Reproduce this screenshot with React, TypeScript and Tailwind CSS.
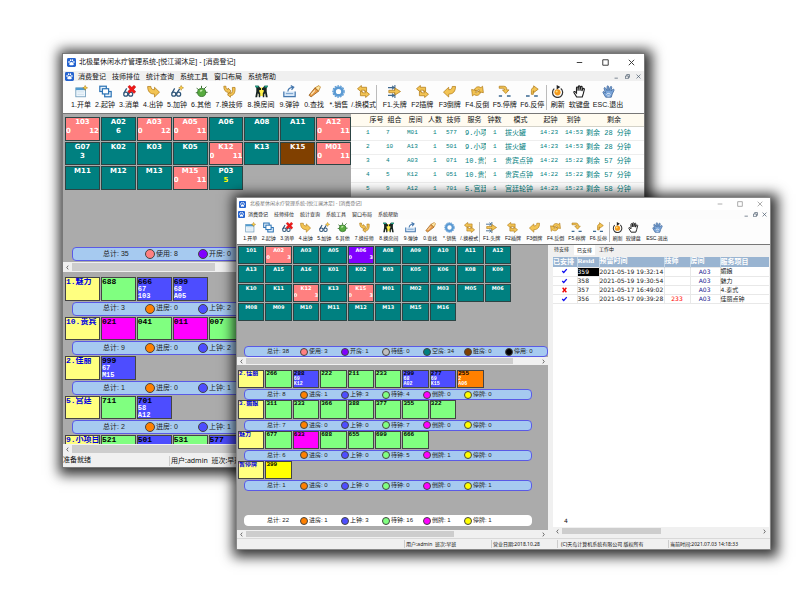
import type { ReactNode } from 'react';
import clsx from 'clsx';

type Size = 'lg' | 'sm';

interface Room {
  name: string;
  tone?: string;
  left?: string;
  right?: string;
  center?: string;
}

interface Tech {
  lines: string[];
  tone: string;
}

interface Stat {
  label: string;
  value: string;
  dot: string;
}

interface Group {
  name: string;
  techs: Tech[];
  total?: string;
  counts?: string[];
}

const TEAL = 'bg-[#008080]';
const PINK = 'bg-[#ff8080]';
const PURPLE = 'bg-[#8000ff]';
const BROWN = 'bg-[#804000]';
const GREEN = 'bg-[#80ff80]';
const BLUE = 'bg-[#4d4dff]';
const MAGENTA = 'bg-[#ff00ff]';
const ORANGE = 'bg-[#ff8000]';
const YELLOW = 'bg-[#ffff00]';

const uiFont = "font-['Liberation_Sans','Noto_Sans_CJK_SC',sans-serif]";
const statusFont = "font-['Noto_Sans','Noto_Sans_CJK_SC',sans-serif]";
const tileFont = "font-['DejaVu_Sans','Noto_Sans_CJK_SC',sans-serif]";
const monoFont = "font-['Liberation_Mono','Noto_Sans_CJK_SC',monospace]";

const menus = ['消费登记', '技师排位', '统计查询', '系统工具', '窗口布局', '系统帮助'];

function toRooms(names: string, busy: Record<string, Partial<Room>>): Room[] {
  return names.split(' ').map((name) => ({ name, ...busy[name] }));
}

const backRooms = toRooms(
  '103 A02 A03 A05 A06 A08 A11 A12 G07 K02 K03 K05 K12 K13 K15 M01 M11 M12 M13 M15 P03',
  {
    '103': { tone: PINK, left: '0', right: '12' },
    A02: { center: '6' },
    A03: { tone: PINK, left: '0', right: '12' },
    A05: { tone: PINK, left: '0', right: '11' },
    A12: { tone: PINK, left: '0', right: '11' },
    G07: { center: '3' },
    K12: { tone: PINK, left: '0', right: '11' },
    K15: { tone: BROWN },
    M01: { tone: PINK, left: '0', right: '11' },
    M15: { tone: PINK, left: '0', right: '11' },
    P03: { center: '5' },
  }
);

const frontRooms = toRooms(
  '101 A02 A03 A05 A06 A08 A09 A10 A11 A12 A13 A15 A16 K01 K02 K03 K05 K06 K08 K09 K10 K11 K12 K13 K15 M01 M02 M03 M05 M06 M08 M09 M10 M11 M12 M13 M15 M16',
  {
    A02: { tone: PINK, left: '0', right: '3' },
    A06: { tone: PURPLE, left: '0', right: '3' },
    K12: { tone: PINK, left: '0', right: '3' },
    K15: { tone: PINK, left: '0', right: '3' },
  }
);

function tech(tone: string, ...lines: string[]): Tech {
  return { tone, lines };
}

const backGroups: Group[] = [
  {
    name: '1.魅力',
    techs: [tech(GREEN, '688'), tech(BLUE, '666', '67', '103'), tech(BLUE, '699', '68', 'A05')],
    total: '3',
    counts: ['0', '2'],
  },
  {
    name: '10.贵宾',
    techs: [tech(MAGENTA, '021'), tech(GREEN, '041'), tech(MAGENTA, '011'), tech(GREEN, '007')],
    total: '9',
    counts: ['0', '2'],
  },
  { name: '2.佳丽', techs: [tech(BLUE, '999', '67', 'M15')], total: '1', counts: ['0', '1'] },
  {
    name: '5.宫廷',
    techs: [tech(GREEN, '711'), tech(BLUE, '701', '58', 'A12')],
    total: '2',
    counts: ['0', '1'],
  },
  {
    name: '9.小项目',
    techs: [tech(GREEN, '521'), tech(BLUE, '501'), tech(GREEN, '531'), tech(BLUE, '577')],
  },
];

const frontGroups: Group[] = [
  {
    name: '2.佳丽',
    techs: [
      tech(GREEN, '266'),
      tech(BLUE, '288', '69', 'K12'),
      tech(GREEN, '222'),
      tech(GREEN, '211'),
      tech(GREEN, '233'),
      tech(BLUE, '299', '68', 'A02'),
      tech(BLUE, '277', '69', 'K15'),
      tech(ORANGE, '255', '2', 'A06'),
    ],
    total: '8',
    counts: ['1', '3', '4', '0', '0'],
  },
  {
    name: '3.媚娘',
    techs: ['311', '333', '366', '388', '377', '355', '322'].map((n) => tech(GREEN, n)),
    total: '7',
    counts: ['0', '0', '7', '0', '0'],
  },
  {
    name: '魅力',
    techs: [
      tech(GREEN, '677'),
      tech(MAGENTA, '633'),
      tech(GREEN, '688'),
      tech(GREEN, '655'),
      tech(GREEN, '699'),
      tech(GREEN, '666'),
    ],
    total: '6',
    counts: ['0', '0', '5', '1', '0'],
  },
  { name: '暂停牌', techs: [tech(YELLOW, '399')], total: '1', counts: ['0', '0', '0', '0', '1'] },
];

const roomStats: Stat[] = [
  { label: '使用', value: '3', dot: PINK },
  { label: '开房', value: '1', dot: PURPLE },
  { label: '待结', value: '0', dot: 'bg-[#c0c0c0]' },
  { label: '空房', value: '34', dot: TEAL },
  { label: '脏房', value: '0', dot: BROWN },
  { label: '停用', value: '0', dot: 'bg-black' },
];

const techKinds = [
  { label: '进房', dot: ORANGE },
  { label: '上钟', dot: BLUE },
  { label: '待钟', dot: GREEN },
  { label: '倒牌', dot: MAGENTA },
  { label: '停牌', dot: YELLOW },
];

function techStats(counts: string[]): Stat[] {
  return counts.map((value, i) => ({ ...techKinds[i], value }));
}

const clockHead = ['序号', '组合', '房间', '人数', '技师', '服务', '钟数', '模式', '起钟', '到钟', '剩余'];
const clockCols = [
  'w-[33px]', 'w-[21px]', 'w-[21px]', 'w-[18px]', 'w-[19px]', 'w-[23px]',
  'w-[17px]', 'w-[35px]', 'w-[25px]', 'w-[21px]', '',
];
const clockRows = [
  ['1', '7', 'M01', '1', '577', '9.小项', '1', '拔火罐', '14:23', '14:53', '剩余 28 分钟'],
  ['2', '10', 'A13', '1', '501', '9.小项', '1', '拔火罐', '14:23', '14:53', '剩余 28 分钟'],
  ['3', '4', 'A03', '1', '071', '10.贵宾', '1', '贵宾点钟', '14:22', '15:22', '剩余 57 分钟'],
  ['4', '5', 'K12', '1', '051', '10.贵宾', '1', '贵宾点钟', '14:22', '15:22', '剩余 57 分钟'],
  ['5', '9', 'A12', '1', '701', '5.宫廷', '1', '宫廷轮钟', '14:23', '15:23', '剩余 58 分钟'],
];

const bookings = [
  { ok: true, id: '359', time: '2021-05-19 19:32:14', tech: '', room: 'A03', item: '媚娘' },
  { ok: true, id: '358', time: '2021-05-19 19:30:54', tech: '', room: 'A03', item: '魅力' },
  { ok: false, id: '357', time: '2021-05-17 16:49:02', tech: '', room: 'A03', item: '4.泰式' },
  { ok: true, id: '356', time: '2021-05-17 09:39:28', tech: '233', room: 'A03', item: '佳丽点钟' },
];

/* ---------- toolbar drawings, all on a 16 x 16 grid ---------- */

const gold = { fill: '#f3c454', stroke: '#b07a16', strokeWidth: 0.9, strokeLinejoin: 'round' as const };

function Sparkle() {
  return (
    <path d="M12.5 0.5l.9 2.1 2.1.9-2.1.9-.9 2.1-.9-2.1-2.1-.9 2.1-.9z" fill="#ffd54a" stroke="#a8740f" strokeWidth=".6" />
  );
}

function Glasses() {
  return (
    <g fill="none" stroke="#2d5478" strokeWidth="1.5">
      <circle cx="3.4" cy="11.3" r="2.5" />
      <circle cx="9.4" cy="11.3" r="2.5" />
      <path d="M1.2 10L4.5 4.2M7 10.4l3.6-5.6" />
    </g>
  );
}

// fat outlined arrows, left on top and right below
const swapArrows = (
  <g {...gold}>
    <path d="M.6 4.6L5.400 .6v2.200h6.400v5h-2.600V6.400H5.400v2.200z" />
    <path d="M15.400 11.400L10.600 15.400v-2.200H4.200v-5h2.600v1.400h3.800V7.400z" />
  </g>
);

const icons: Record<string, ReactNode> = {
  open: (
    <>
      <rect x="1" y="3.5" width="12" height="11" fill="#eef6fc" stroke="#6b98b8" />
      <rect x="1" y="3.5" width="12" height="2.8" fill="#4f9bd0" />
      <path d="M3 8.5h8M3 11.5h8" stroke="#c7dbe8" />
      <Sparkle />
    </>
  ),
  start: (
    <g fill="#e8f3fd" stroke="#2d74b5" strokeWidth="1.5">
      <rect x="1" y="1.5" width="8" height="6.5" />
      <rect x="7" y="8" width="8" height="6.5" />
      <rect x="4.2" y="4.6" width="7.6" height="6.4" fill="#fff" />
    </g>
  ),
  cancel: (
    <>
      <Glasses />
      <path d="M6 2.2L8.2.4l2.6 2.5L13.6.3 15.8 2.6 13.2 5.4l2.6 3-2.4 2-2.6-2.7L8 10.2 5.8 8l2.7-2.8z" fill="#f01818" stroke="#a00" strokeWidth=".5" />
    </>
  ),
  out: <path {...gold} d="M.8 1.800h4c0 2.800 1.400 4 4.400 4V2.800l6.200 6-6.200 6v-3.600C3.600 11.200.8 7.800.8 1.800z" />,
  add: (
    <>
      <Glasses />
      <Sparkle />
    </>
  ),
  other: (
    <>
      <path d="M2 4l3 2M1 9.5h3M11 5l3-3M12 9h3.5M8 4V1" stroke="#3b6e31" strokeWidth="1.2" />
      <circle cx="8.2" cy="9.2" r="5" fill="#58ab3f" stroke="#2f7028" />
      <path d="M6 6.7c1-1 2.5-1.2 3.6-.7L7 9z" fill="#c7efae" />
    </>
  ),
  tech: (
    <g {...gold}>
      <path d="M1 1.5h2.6c0 2.8.8 3.8 2.6 4V3.7L10 7.4 6.2 11V9C2.7 8.7 1 6 1 1.5z" />
      <path d="M11.5 3h3.3c.6 6.2-1.4 9.8-5.6 10.2V15L5.5 12 9.2 9v1.6c2.2-.5 2.8-3 2.3-7.6z" />
    </g>
  ),
  room: (
    <>
      <rect x="4.500" y="3" width="7" height="10.500" fill="#fff04a" />
      <path d="M0 1h4.500l1.700 2.400L7.400 4v2L5.300 6v2.400L6.400 10v5H4.600v-3.600L3.500 10 2.700 15H.4L1.600 8V4z" fill="#172421" />
      <path d="M16 1h-4.500L9.800 3.400 8.600 4v2l2.100 0v2.400L9.600 10v5h1.800v-3.600L12.500 10l.8 5h2.300L14.400 8V4z" fill="#172421" />
      <path d="M0 1h4.300v2H1zM16 1h-4.300v2H15z" fill="#19a184" />
    </>
  ),
  bounce: (
    <g fill="none" stroke="#4577ad" strokeWidth="1.5">
      <path d="M1 8v6.200h14V8" fill="#d8e8f8" />
      <path d="M3.500 10.500h9" stroke="#80a8d0" />
      <path d="M6 8c.3-3.200 2.200-4.700 6-5M9.500.8l3.700 2-2.700 3.200" />
    </g>
  ),
  find: (
    <>
      <path d="M8.500 3.500L13.500.7l1.800 1.800L13 7.600z" fill="#ffe9a6" stroke="#c2852b" />
      <path d="M1.200 12.600l7.300-9.100L13 7.600l-9.200 7z" fill="#e99b45" stroke="#99601f" />
      <path d="M4 11.500l4.500-5" stroke="#fff0c8" strokeWidth="1.300" />
    </>
  ),
  sale: (
    <>
      <circle cx="8" cy="8" r="7" fill="none" stroke="#5b9ad3" strokeWidth="1.400" strokeDasharray="2.200 1.200" />
      <circle cx="8" cy="8" r="4.900" fill="#fff" stroke="#5b9ad3" strokeWidth="3.400" />
    </>
  ),
  mode: swapArrows,
  head: (
    <>
      <path d="M0 3.200h7M0 12.800h7M5 1l2.500 2.200L5 5.500M5 10.500l2.500 2.300L5 15M8.500 0v16" fill="none" stroke="#3f678d" strokeWidth="1.300" />
      <path {...gold} d="M1 6.500h7.500V3.600l6.900 4.400-6.900 4.400V9.500H1z" />
    </>
  ),
  insert: swapArrows,
  invert: <path {...gold} d="M15.400 1.800h-4c0 2.800-1.400 4-4.400 4V2.800l-6.400 6 6.400 6v-3.600c5.600 0 8.400-3.400 8.400-9.400z" />,
  swirl: (
    <g {...gold}>
      <path d="M.8 5.500l1 8 2-1.800c3 2 6.600 1.300 8-2.700L8.600 7.600c-.8 1.800-2 2.200-3.200 1.400L7.200 7z" />
      <path d="M15.200 9.500l-1-8-2 1.800c-3-2-6.600-1.300-8 2.700l3.200 1.400c.8-1.800 2-2.200 3.200-1.400L8.800 8z" />
    </g>
  ),
  stop: (
    <>
      <path {...gold} d="M1.500 1.500h5.500c3 0 4 2 3.700 4.500h2.800L9.500 10.500 5.500 6H8c0-1.500-.6-2-2-2H1.500z" />
      <path d="M1 13.500h4M11 13.500h4.500" stroke="#3a6790" strokeWidth="1.800" />
    </>
  ),
  unstop: (
    <>
      <path {...gold} d="M6.600 11.500V7c0-2.400 1-3.600 2.800-3.600V1L15 5.200 9.400 9.400V7c-.4 0-.4.400-.4 1v3.500z" />
      <path d="M0 13.500h4.500M10 13.500h4.500" stroke="#3a6790" strokeWidth="1.800" />
    </>
  ),
  refresh: (
    <>
      <circle cx="8" cy="9" r="3.800" fill="#f49a1d" />
      <circle cx="7" cy="8" r="1.300" fill="#ffe27a" />
      <path d="M4 4.500a6.200 6.200 0 1 0 8-.2" fill="none" stroke="#333" strokeWidth="1.500" />
      <path d="M7 0l4.500 2.500L7 5.500z" fill="#222" />
    </>
  ),
  hand: (
    <path
      d="M4.500 14.800L1.300 9.500c-.7-1.300.7-2 1.600-.9L4.300 10V3.400c0-1.300 1.800-1.300 1.900 0V7l.5-5c.1-1.300 1.900-1.200 1.900.1V7l.9-4.600c.3-1.200 1.900-.9 1.800.4L10.900 7.500l1.400-2.800c.6-1.100 2-.4 1.700.7L12.600 11l-1.200 3.800z"
      fill="#fff"
      stroke="#1d1d1d"
      strokeWidth="1.400"
    />
  ),
  exit: (
    <>
      <path
        d="M4.500 15L1.300 9.500c-.7-1.300.7-2 1.600-.9L4.300 10 2.600 4.400c-.3-1.300 1.400-1.700 1.900-.4L6.300 7 6.200 2c0-1.300 1.900-1.200 1.900.1L8.600 7l1.600-4.600c.4-1.200 2-.7 1.800.5L11 7.500l2.300-2c1-.9 2.100.3 1.400 1.300L12.600 11l-1.200 4z"
        fill="#7ba6da"
        stroke="#41699c"
      />
      <path d="M5.500 11.800c1-2 4-2 4.800 0M6.500 13.500h3" fill="none" stroke="#fff" />
    </>
  ),
};

function Icon({ name, size }: { name: string; size: Size }) {
  return (
    <svg viewBox="0 0 16 16" className={size === 'lg' ? 'h-[13px] w-[13px]' : 'h-[11px] w-[11px]'} aria-hidden="true">
      {icons[name]}
    </svg>
  );
}

function Logo({ size }: { size: Size }) {
  return (
    <svg viewBox="0 0 16 16" className={clsx('shrink-0', size === 'lg' ? 'h-[9px] w-[9px]' : 'h-[7px] w-[7px]')} aria-hidden="true">
      <rect width="16" height="16" rx="2.500" fill="#2563cf" />
      <g fill="#fff">
        <ellipse cx="3.700" cy="7" rx="1.300" ry="1.800" />
        <ellipse cx="6.400" cy="4" rx="1.300" ry="1.800" />
        <ellipse cx="9.700" cy="4" rx="1.300" ry="1.800" />
        <ellipse cx="12.300" cy="7" rx="1.300" ry="1.800" />
        <path d="M8 7.300c2 0 4 2.500 4 4 0 2.200-2.300 1.500-4 1.500s-4 .7-4-1.500c0-1.500 2-4 4-4z" />
      </g>
    </svg>
  );
}

const toolGroups = [
  {
    lg: 'w-36',
    sm: 'w-[111px]',
    tools: [
      ['open', '1.开单'],
      ['start', '2.起钟'],
      ['cancel', '3.消单'],
      ['out', '4.出钟'],
      ['add', '5.加钟'],
      ['other', '6.其他'],
    ],
  },
  { lg: 'w-16', sm: 'w-[49px]', tools: [['tech', '7.换技师'], ['room', '8.换房间']] },
  {
    lg: 'w-[99px]',
    sm: 'w-[78px]',
    tools: [['bounce', '9.弹钟'], ['find', '0.查找'], ['sale', '*.销售'], ['mode', '/.换模式']],
  },
  {
    lg: 'w-[170px] border-l pl-1',
    sm: 'w-[130px] border-l pl-px',
    tools: [
      ['head', 'F1.头牌'],
      ['insert', 'F2插牌'],
      ['invert', 'F3倒牌'],
      ['swirl', 'F4.反倒'],
      ['stop', 'F5.停牌'],
      ['unstop', 'F6.反停'],
    ],
  },
  { lg: 'w-11 border-l', sm: 'w-8 border-l', tools: [['refresh', '刷新'], ['hand', '软键盘']] },
  { lg: 'w-9', sm: 'w-8', tools: [['exit', 'ESC.退出']] },
];

function Toolbar({ size }: { size: Size }) {
  const lg = size === 'lg';
  return (
    <div
      className={clsx(
        'flex items-center overflow-hidden border-b border-[#777] bg-[#fdfdfd] text-[#111]',
        lg ? 'h-[33px] pl-1.5 text-[7px]' : 'h-[26px] pl-1 text-[5px]'
      )}
    >
      {toolGroups.map((group) => (
        <div key={group.lg} className={clsx('flex shrink-0 border-[#bbb]', group[size])}>
          {group.tools.map(([icon, label]) => (
            <button
              key={label}
              className={clsx(
                'flex w-0 flex-1 flex-col items-center whitespace-nowrap',
                lg ? 'gap-0.5 leading-[10px]' : 'gap-px leading-[8px]'
              )}
            >
              <Icon name={icon} size={size} />
              {label}
            </button>
          ))}
        </div>
      ))}
    </div>
  );
}

function WindowButtons({ small, size }: { small?: boolean; size: Size }) {
  const box = small ? 'h-[5px] w-[5px]' : size === 'lg' ? 'h-[7px] w-[7px]' : 'h-[6px] w-[6px]';
  const paths: [string, string][] = [
    ['最小化', small ? 'M1 7.500h6' : 'M1 4.500h7'],
    ['还原', small ? 'M1 3.500h5v5h-5zM3 3V1h5v5H6' : 'M1 1h7v7H1z'],
    ['关闭', 'M1 1l7 7M8 1l-7 7'],
  ];
  return (
    <div
      className={clsx(
        'ml-auto flex items-center',
        small ? 'pr-[3px] text-[#456]' : size === 'lg' ? 'gap-[19px] pr-[9px] text-[#333]' : 'gap-[14px] pr-[7px] text-[#999]',
        small && (size === 'sm' ? 'gap-[4px]' : 'gap-[6px]')
      )}
    >
      {paths.map(([label, d]) => (
        <button key={label} aria-label={label}>
          <svg viewBox="0 0 9 9" className={clsx('block', box)} fill="none" stroke="currentColor" strokeWidth="1.200">
            <path d={d} />
          </svg>
        </button>
      ))}
    </div>
  );
}

function TopBars({ size }: { size: Size }) {
  const lg = size === 'lg';
  return (
    <>
      <div className={clsx('flex items-center bg-white', lg ? 'h-[17px] gap-[3px] pl-1 text-[7px]' : 'h-[12px] gap-1 pl-0.5 text-[5px] text-[#777]')}>
        <Logo size={size} />
        <h2 className="whitespace-nowrap">北极星休闲水疗管理系统-[悦江澜沐足] - [消费登记]</h2>
        <WindowButtons size={size} />
      </div>
      <div className={clsx('flex items-center', lg ? 'h-[10px] bg-[#f0f0f0] pl-0.5 text-[7px]' : 'h-[9px] bg-[#fcfcfc] pl-px text-[5px]')}>
        <Logo size={size} />
        <nav className={clsx('flex gap-1.5', lg ? 'ml-1' : 'ml-[3px]')}>
          {menus.map((menu) => (
            <button key={menu} className="whitespace-nowrap leading-[9px]">
              {menu}
            </button>
          ))}
        </nav>
        <WindowButtons small size={size} />
      </div>
      <Toolbar size={size} />
    </>
  );
}

function RoomTile({ room, size }: { room: Room; size: Size }) {
  return (
    <button
      className={clsx(
        'flex min-w-0 flex-col overflow-hidden border border-[#2c4444] font-bold text-white',
        room.tone ?? TEAL,
        tileFont,
        size === 'lg' ? 'text-[7px] leading-[9px]' : 'text-[5px] leading-[7px]'
      )}
    >
      <span className="w-full text-center">{room.name}</span>
      {room.center && (
        <span className={clsx('w-full text-center', room.center === '5' && 'text-[#ffff00]')}>{room.center}</span>
      )}
      {room.left && (
        <span className="flex w-full justify-between">
          <span>{room.left}</span>
          <span>{room.right}</span>
        </span>
      )}
    </button>
  );
}

interface SummaryProps {
  size: Size;
  total: string;
  stats: Stat[];
  plain?: boolean;
  open?: boolean;
}

function Summary({ size, total, stats, plain, open }: SummaryProps) {
  const lg = size === 'lg';
  return (
    <div
      className={clsx(
        'flex items-center overflow-hidden whitespace-nowrap rounded border text-[#222]',
        plain ? 'border-white bg-white' : 'border-[#5a5ae6] bg-[#a6caf0]',
        lg ? 'ml-[7px] h-[14px] text-[7px]' : 'ml-[6px] h-[11px] text-[6px] leading-[9px]',
        !lg && !open && 'mr-[16px]'
      )}
    >
      <span className={clsx('shrink-0', lg ? 'w-[72px] pl-[30px]' : 'w-[55px] pl-[22px]')}>总计: {total}</span>
      {stats.map((stat) => (
        <span key={stat.label} className={clsx('flex shrink-0 items-center gap-px', lg ? 'w-[53px]' : 'w-[41px]')}>
          <i className={clsx('rounded-full border border-[#444]', stat.dot, lg ? 'h-[10px] w-[10px]' : 'h-2 w-2')} />
          {stat.label}: {stat.value}
        </span>
      ))}
    </div>
  );
}

function TechGroup({ group, size }: { group: Group; size: Size }) {
  const lg = size === 'lg';
  return (
    <section className="flex min-h-0 flex-col">
      <div className={clsx('mb-px grid min-h-0 flex-1 gap-px', lg ? 'grid-cols-8' : 'mr-[37px] grid-cols-10')}>
        {[tech('bg-[#ffff80]', group.name), ...group.techs].map((item, i) => (
          <button
            key={item.lines[0]}
            className={clsx(
              'flex min-w-0 flex-col items-start overflow-hidden whitespace-nowrap border border-[#444] font-bold',
              monoFont,
              item.tone,
              i === 0 ? 'text-[#0000e0]' : 'text-black',
              lg ? 'text-[8px] leading-[8px]' : 'text-[6px] leading-[6px]'
            )}
          >
            <span>{item.lines[0]}</span>
            {item.lines.slice(1).map((line) => (
              <span key={line} className={clsx('text-white', lg ? 'text-[7px] leading-[7px]' : 'text-[5px] leading-[5px]')}>
                {line}
              </span>
            ))}
          </button>
        ))}
      </div>
      {group.total && group.counts ? (
        <Summary size={size} total={group.total} stats={techStats(group.counts)} />
      ) : (
        <div className="h-[14px]" />
      )}
    </section>
  );
}

function ScrollBar({ size, thumb }: { size: Size; thumb: string }) {
  return (
    <div className={clsx('flex shrink-0 items-center gap-[3px] bg-[#f0f0f0] px-[3px] text-[#444]', size === 'lg' ? 'h-[10px]' : 'h-2')}>
      <svg viewBox="0 0 4 6" className="h-[5px] w-[3px]" fill="none" stroke="currentColor">
        <path d="M3 .5L1 3l2 2.500" />
      </svg>
      <div className="h-full flex-1 py-px">
        <div className={clsx('h-full bg-[#cdcdcd]', thumb)} />
      </div>
      <svg viewBox="0 0 4 6" className="h-[5px] w-[3px]" fill="none" stroke="currentColor">
        <path d="M1 .5L3 3 1 5.500" />
      </svg>
    </div>
  );
}

function ClockTable() {
  return (
    <table className="w-full table-fixed border-collapse whitespace-nowrap text-[7px]">
      <thead>
        <tr className="h-[12px] border-b border-[#d4d2c8] bg-[#fffbf0] leading-[10px]">
          {clockHead.map((name, i) => (
            <th key={name} className={clsx('p-0 font-normal', i === 0 && 'pl-[18px]', clockCols[i])}>
              {name}
            </th>
          ))}
        </tr>
      </thead>
      <tbody className={clsx('text-[#008080]', monoFont)}>
        {clockRows.map((row) => (
          <tr key={row[0]} className="h-[14px] border-b border-[#eee] leading-[12px]">
            {row.map((cell, i) => (
              <td
                key={clockHead[i]}
                className={clsx(
                  'overflow-hidden p-0',
                  i === 0 ? 'pl-[15px]' : i === 3 || i === 6 ? 'pl-[7px]' : 'pl-0.5',
                  /^[\w:]+$/.test(cell) && 'text-[6px]'
                )}
              >
                {cell}
              </td>
            ))}
          </tr>
        ))}
      </tbody>
    </table>
  );
}

function BookingTable() {
  return (
    <table className={clsx('w-full table-fixed border-collapse whitespace-nowrap text-[6px]', tileFont)}>
      <thead>
        <tr className="h-[10px] bg-[#99b4d1] text-left font-['Liberation_Serif','Noto_Sans_CJK_SC',serif] text-[7px] leading-[9px] text-white">
          <th className="w-6 p-0">已安排</th>
          <th className="w-[22px] border-l border-[#c4d4e4] p-0">Resid</th>
          <th className="w-[65px] border-l border-[#c4d4e4] p-0">预留时间</th>
          <th className="w-[26px] border-l border-[#c4d4e4] p-0">技师</th>
          <th className="w-[30px] border-l border-[#c4d4e4] p-0">房间</th>
          <th className="border-l border-[#c4d4e4] p-0">服务项目</th>
        </tr>
      </thead>
      <tbody className="text-[#222]">
        {bookings.map((row) => (
          <tr key={row.id} className="h-[9px] leading-[8px]">
            <td className="border-b border-[#e8e8e8] p-0">
              <svg viewBox="0 0 8 8" className="mx-auto block h-[6px] w-[7px]" fill="none" strokeWidth="1.800">
                {row.ok ? <path d="M1 4l2 2 4-4.500" stroke="#1010f0" /> : <path d="M1.500 1l5 6M6.500 1l-5 6" stroke="#e00" />}
              </svg>
            </td>
            <td className={clsx('border border-[#e8e8e8] p-0', row.id === '359' && 'bg-black text-white')}>{row.id}</td>
            <td className="border border-[#e8e8e8] p-0">{row.time}</td>
            <td className="border border-[#e8e8e8] p-0 text-center text-[#f00]">{row.tech}</td>
            <td className="border border-[#e8e8e8] p-0 pr-[9px] text-right text-[#1a1a90]">{row.room}</td>
            <td className="border-b border-[#e8e8e8] p-0">{row.item}</td>
          </tr>
        ))}
      </tbody>
    </table>
  );
}

function BackWindow() {
  return (
    <div className="absolute left-[62px] right-[155px] top-[53px] border border-[#777] bg-[#f0f0f0] shadow-[2px_2px_12px_5px_rgba(0,0,0,0.8)]">
      <TopBars size="lg" />
      <div className="flex">
        <div className="flex w-72 shrink-0 flex-col bg-[#ababab]">
          <div className="flex h-[148px] flex-col justify-between pb-px pl-0.5 pt-[3px]">
            <div className="grid h-[73px] grid-cols-8 grid-rows-3 gap-px">
              {backRooms.map((room) => (
                <RoomTile key={room.name} room={room} size="lg" />
              ))}
            </div>
            <Summary
              size="lg"
              total="35"
              stats={[
                { label: '使用', value: '8', dot: PINK },
                { label: '开房', value: '0', dot: PURPLE },
              ]}
            />
          </div>
          <ScrollBar size="lg" thumb="w-[53%]" />
          <div className="mt-[3px] h-[169px] overflow-hidden pl-0.5 pt-0.5">
            <div className="grid h-[197px] grid-rows-5 gap-px">
              {backGroups.map((group) => (
                <TechGroup key={group.name} group={group} size="lg" />
              ))}
            </div>
          </div>
          <ScrollBar size="lg" thumb="w-3/4" />
        </div>
        <div className="min-w-0 flex-1 bg-white">
          <ClockTable />
        </div>
      </div>
      <footer className={clsx('flex h-[13px] items-center whitespace-nowrap text-[7px]', statusFont)}>
        <span className="w-[106px]">准备就绪</span>
        <span className="border-l border-[#ccc] pl-px leading-[10px]">用户:admin&nbsp; 班次:早班</span>
      </footer>
    </div>
  );
}

function FrontWindow() {
  return (
    <div className="absolute left-[236px] right-[29px] top-[197px] border border-[#888] bg-[#f0f0f0] shadow-[2px_2px_12px_5px_rgba(0,0,0,0.8)]">
      <TopBars size="sm" />
      <div className="flex">
        <div className="flex w-[311px] shrink-0 flex-col bg-[#ababab]">
          <div className="flex h-[112px] flex-col justify-between pl-px pt-px">
            <div className="mr-[37px] grid h-[75px] grid-cols-10 grid-rows-4 gap-px">
              {frontRooms.map((room) => (
                <RoomTile key={room.name} room={room} size="sm" />
              ))}
            </div>
            <Summary size="sm" total="38" stats={roomStats} open />
          </div>
          <ScrollBar size="sm" thumb="w-[91%]" />
          <div className="mt-[3px] flex h-[162px] flex-col justify-between pb-1 pl-px pt-0.5">
            <div className="grid h-[121px] grid-rows-4">
              {frontGroups.map((group) => (
                <TechGroup key={group.name} group={group} size="sm" />
              ))}
            </div>
            <Summary size="sm" total="22" stats={techStats(['1', '3', '16', '1', '1'])} plain />
          </div>
          <ScrollBar size="sm" thumb="w-[71%]" />
        </div>
        <div className="flex min-w-0 flex-1 flex-col pl-[5px] pr-px">
          <div className="flex h-[12px] items-start text-[5px] leading-[9px]">
            <button className="px-px">待安排</button>
            <button className="ml-1 bg-white px-[3px] leading-[10px]">已安排</button>
            <button className="ml-[3px] px-px">工作中</button>
          </div>
          <div className="flex flex-1 flex-col justify-between bg-white">
            <BookingTable />
            <p className={clsx('pb-0.5 pl-[11px] text-[6px] leading-[8px]', tileFont)}>4</p>
          </div>
          <ScrollBar size="sm" thumb="w-1/2" />
          <div className="h-[3px]" />
        </div>
      </div>
      <footer className={clsx('flex h-[11px] items-center whitespace-nowrap border-t border-[#d8d8d8] text-[5px] leading-[8px]', statusFont)}>
        <span className="ml-[167px] w-[87px] border-l border-[#ccc] pl-px">用户:admin&nbsp; 班次:早班</span>
        <span className="w-[66px] border-l border-[#ccc] pl-px">营业日期:2018.10.28</span>
        <span className="w-[111px] border-l border-[#ccc] pl-[3px]">(C)天岛计算机系统有限公司 版权所有</span>
        <span className="border-l border-[#ccc] pl-px">当前时间:2021.07.03 14:18:33</span>
      </footer>
    </div>
  );
}

function App() {
  return (
    <main className={clsx('relative min-h-screen overflow-hidden bg-white text-[#111]', uiFont)}>
      <BackWindow />
      <FrontWindow />
    </main>
  );
}

export default App;
